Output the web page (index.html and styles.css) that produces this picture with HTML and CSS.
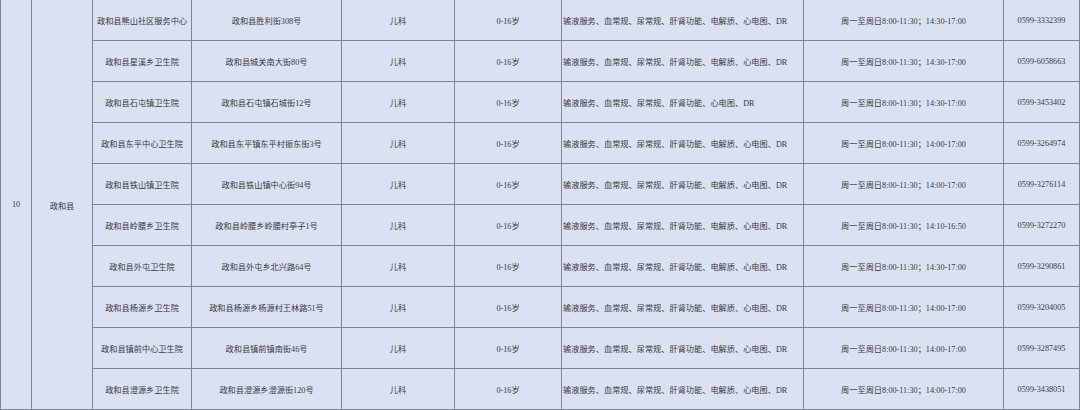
FILE: index.html
```html
<!DOCTYPE html>
<html lang="zh">
<head>
<meta charset="utf-8">
<link rel="stylesheet" href="styles.css">
</head>
<body>
<div class="grid">
  <div class="cell num">10</div>
  <div class="cell county">政和县</div>

  <div class="cell">政和县熊山社区服务中心</div><div class="cell">政和县胜利街308号</div><div class="cell">儿科</div><div class="cell">0-16岁</div><div class="cell left">输液服务、血常规、尿常规、肝肾功能、电解质、心电图、DR</div><div class="cell">周一至周日8:00-11:30；14:30-17:00</div><div class="cell">0599-3332399</div>

  <div class="cell">政和县星溪乡卫生院</div><div class="cell">政和县城关南大街80号</div><div class="cell">儿科</div><div class="cell">0-16岁</div><div class="cell left">输液服务、血常规、尿常规、肝肾功能、电解质、心电图、DR</div><div class="cell">周一至周日8:00-11:30；14:30-17:00</div><div class="cell">0599-6058663</div>

  <div class="cell">政和县石屯镇卫生院</div><div class="cell">政和县石屯镇石城街12号</div><div class="cell">儿科</div><div class="cell">0-16岁</div><div class="cell left">输液服务、血常规、尿常规、肝肾功能、心电图、DR</div><div class="cell">周一至周日8:00-11:30；14:30-17:00</div><div class="cell">0599-3453402</div>

  <div class="cell">政和县东平中心卫生院</div><div class="cell">政和县东平镇东平村振东街3号</div><div class="cell">儿科</div><div class="cell">0-16岁</div><div class="cell left">输液服务、血常规、尿常规、肝肾功能、电解质、心电图、DR</div><div class="cell">周一至周日8:00-11:30；14:00-17:00</div><div class="cell">0599-3264974</div>

  <div class="cell">政和县铁山镇卫生院</div><div class="cell">政和县铁山镇中心街94号</div><div class="cell">儿科</div><div class="cell">0-16岁</div><div class="cell left">输液服务、血常规、尿常规、肝肾功能、电解质、心电图、DR</div><div class="cell">周一至周日8:00-11:30；14:00-17:00</div><div class="cell">0599-3276114</div>

  <div class="cell">政和县岭腰乡卫生院</div><div class="cell">政和县岭腰乡岭腰村亭子1号</div><div class="cell">儿科</div><div class="cell">0-16岁</div><div class="cell left">输液服务、血常规、尿常规、肝肾功能、电解质、心电图、DR</div><div class="cell">周一至周日8:00-11:30；14:10-16:50</div><div class="cell">0599-3272270</div>

  <div class="cell">政和县外屯卫生院</div><div class="cell">政和县外屯乡北兴路64号</div><div class="cell">儿科</div><div class="cell">0-16岁</div><div class="cell left">输液服务、血常规、尿常规、肝肾功能、电解质、心电图、DR</div><div class="cell">周一至周日8:00-11:30；14:30-17:00</div><div class="cell">0599-3290861</div>

  <div class="cell">政和县杨源乡卫生院</div><div class="cell">政和县杨源乡杨源村王林路51号</div><div class="cell">儿科</div><div class="cell">0-16岁</div><div class="cell left">输液服务、血常规、尿常规、肝肾功能、电解质、心电图、DR</div><div class="cell">周一至周日8:00-11:30；14:00-17:00</div><div class="cell">0599-3204005</div>

  <div class="cell">政和县镇前中心卫生院</div><div class="cell">政和县镇前镇南街46号</div><div class="cell">儿科</div><div class="cell">0-16岁</div><div class="cell left">输液服务、血常规、尿常规、肝肾功能、电解质、心电图、DR</div><div class="cell">周一至周日8:00-11:30；14:00-17:00</div><div class="cell">0599-3287495</div>

  <div class="cell">政和县澄源乡卫生院</div><div class="cell">政和县澄源乡澄源街120号</div><div class="cell">儿科</div><div class="cell">0-16岁</div><div class="cell left">输液服务、血常规、尿常规、肝肾功能、电解质、心电图、DR</div><div class="cell">周一至周日8:00-11:30；14:00-17:00</div><div class="cell">0599-3438051</div>
</div>
</body>
</html>
```

FILE: styles.css
```css
html, body {
  margin: 0;
  padding: 0;
  background: #d9e2f3;
}
.grid {
  display: grid;
  width: 1080px;
  height: 410px;
  box-sizing: border-box;
  padding: 0 1px 1px 1px;
  background: #7e8494;
  gap: 1px;
  grid-template-columns: 30px 60px 98px 149px 112px 106px 241px 199px 75px;
  grid-template-rows: repeat(10, 1fr);
  font-family: "Liberation Serif", "Noto Sans CJK SC", serif;
  font-size: 8.2px;
  color: #3a3a3a;
}
.cell {
  background: #d9e2f3;
  display: flex;
  align-items: center;
  justify-content: center;
  text-align: center;
  white-space: nowrap;
  overflow: hidden;
}
.left {
  justify-content: flex-start;
  padding-left: 1px;
}
.num {
  grid-column: 1;
  grid-row: 1 / span 10;
}
.county {
  grid-column: 2;
  grid-row: 1 / span 10;
}
```
